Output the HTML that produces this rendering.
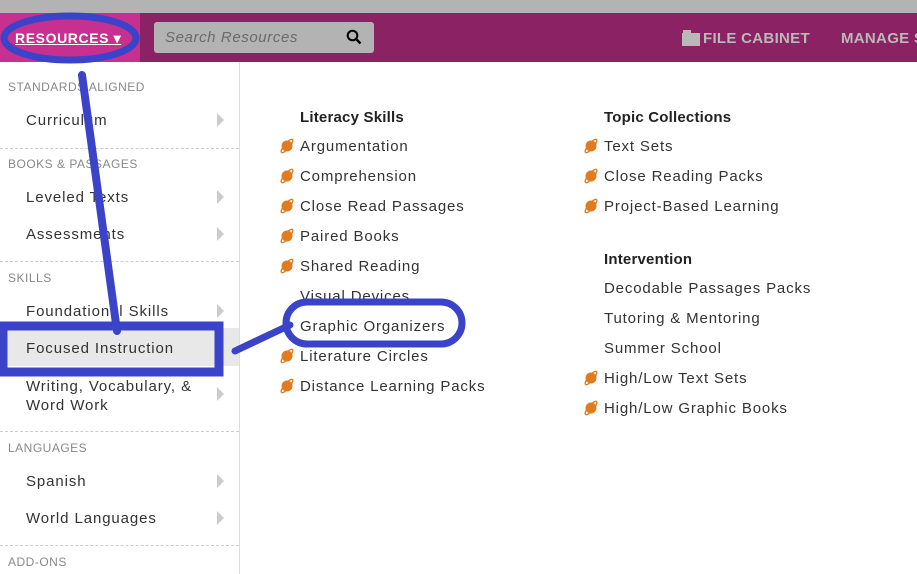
<!DOCTYPE html><html><head><style>
body{margin:0;width:917px;height:574px;overflow:hidden;font-family:"Liberation Sans",sans-serif;background:#fff;position:relative}
.top{position:absolute;left:0;top:0;width:917px;height:13px;background:#b3b3b3}
.hdr{position:absolute;left:0;top:13px;width:917px;height:49px;background:#8b2263}
.pink{position:absolute;left:0;top:0;width:140px;height:49px;background:#c7308e}
.res{position:absolute;left:15px;top:17px;color:#fff;font-weight:bold;font-size:14px;text-decoration:underline;letter-spacing:0.6px}
.search{position:absolute;left:154px;top:9px;width:220px;height:31px;background:#b3b3b3;border-radius:3px;color:#6a6a6a;font-style:italic;font-size:15px;line-height:31px;padding-left:11px;box-sizing:border-box;letter-spacing:0.6px}
.nav{position:absolute;top:17px;color:#b9b9b9;font-weight:bold;font-size:15px;white-space:nowrap;letter-spacing:0.3px}
.side{position:absolute;left:0;top:62px;width:239px;height:512px;border-right:1px solid #ddd}
.cat{position:absolute;left:8px;font-size:12px;color:#888;letter-spacing:0.5px;top:2px}
.it{position:absolute;left:26px;font-size:15px;color:#333;letter-spacing:0.9px;white-space:nowrap}
.arr{position:absolute;left:217px;width:0;height:0;border-left:7px solid #ccc;border-top:7px solid transparent;border-bottom:7px solid transparent}
.hr{position:absolute;left:0;width:239px;border-top:1px dashed #ccc}
.h{position:absolute;font-weight:bold;font-size:15px;color:#222;letter-spacing:0.2px}
.l{position:absolute;font-size:15px;color:#333;letter-spacing:0.85px;white-space:nowrap}
</style></head><body>
<div class="top"></div>
<div class="hdr"><div class="pink"></div><div class="res">RESOURCES ▾</div>
<div class="search">Search Resources<svg style="position:absolute;left:192px;top:7px" width="16" height="16" viewBox="0 0 16 16"><circle cx="6.5" cy="6.5" r="4.8" fill="none" stroke="#000" stroke-width="2"/><line x1="10" y1="10" x2="14.5" y2="14.5" stroke="#000" stroke-width="2.4"/></svg></div>
<svg style="position:absolute;left:682px;top:16px" width="18" height="17" viewBox="0 0 18 17"><rect x="0" y="4" width="18" height="13" fill="#b9b9b9"/><rect x="1" y="1" width="8" height="4" fill="#b9b9b9"/></svg>
<div class="nav" style="left:703px">FILE CABINET</div><div class="nav" style="left:841px">MANAGE S</div></div>
<div class="side">
<div class="cat" style="top:18px">STANDARDS ALIGNED</div>
<div class="it" style="top:50px">Curriculum</div><div class="arr" style="top:51px"></div>
<div class="hr" style="top:86px"></div>
<div class="cat" style="top:95px">BOOKS &amp; PASSAGES</div>
<div class="it" style="top:127px">Leveled Texts</div><div class="arr" style="top:128px"></div>
<div class="it" style="top:164px">Assessments</div><div class="arr" style="top:165px"></div>
<div class="hr" style="top:199px"></div>
<div class="cat" style="top:209px">SKILLS</div>
<div class="it" style="top:241px">Foundational Skills</div><div class="arr" style="top:242px"></div>
<div style="position:absolute;left:0;top:266px;width:239px;height:38px;background:#e8e8e8"></div>
<div class="it" style="top:278px">Focused Instruction</div>
<div class="it" style="top:315px;line-height:19px">Writing, Vocabulary, &amp;<br>Word Work</div><div class="arr" style="top:325px"></div>
<div class="hr" style="top:369px"></div>
<div class="cat" style="top:379px">LANGUAGES</div>
<div class="it" style="top:411px">Spanish</div><div class="arr" style="top:412px"></div>
<div class="it" style="top:448px">World Languages</div><div class="arr" style="top:449px"></div>
<div class="hr" style="top:483px"></div>
<div class="cat" style="top:493px">ADD-ONS</div>
</div>
<svg width="0" height="0" style="position:absolute"><defs><g id="pl"><circle cx="8" cy="8" r="5.5" fill="#e07b1f"/><ellipse cx="8" cy="8" rx="8.5" ry="2.6" transform="rotate(-50 8 8)" fill="none" stroke="#e07b1f" stroke-width="1.4"/></g></defs></svg>
<div class="h" style="left:300px;top:109px">Literacy Skills</div>
<div class="l" style="left:300px;top:138px">Argumentation</div>
<div class="l" style="left:300px;top:168px">Comprehension</div>
<div class="l" style="left:300px;top:198px">Close Read Passages</div>
<div class="l" style="left:300px;top:228px">Paired Books</div>
<div class="l" style="left:300px;top:258px">Shared Reading</div>
<div class="l" style="left:300px;top:288px">Visual Devices</div>
<div class="l" style="left:300px;top:318px">Graphic Organizers</div>
<div class="l" style="left:300px;top:348px">Literature Circles</div>
<div class="l" style="left:300px;top:378px">Distance Learning Packs</div>
<div class="h" style="left:604px;top:109px">Topic Collections</div>
<div class="l" style="left:604px;top:138px">Text Sets</div>
<div class="l" style="left:604px;top:168px">Close Reading Packs</div>
<div class="l" style="left:604px;top:198px">Project-Based Learning</div>
<div class="h" style="left:604px;top:251px">Intervention</div>
<div class="l" style="left:604px;top:280px">Decodable Passages Packs</div>
<div class="l" style="left:604px;top:310px">Tutoring &amp; Mentoring</div>
<div class="l" style="left:604px;top:340px">Summer School</div>
<div class="l" style="left:604px;top:370px">High/Low Text Sets</div>
<div class="l" style="left:604px;top:400px">High/Low Graphic Books</div>
<svg style="position:absolute;left:0;top:0" width="917" height="574">
<use href="#pl" x="279" y="138"/><use href="#pl" x="279" y="168"/><use href="#pl" x="279" y="198"/><use href="#pl" x="279" y="228"/><use href="#pl" x="279" y="258"/><use href="#pl" x="279" y="348"/><use href="#pl" x="279" y="378"/>
<use href="#pl" x="583" y="138"/><use href="#pl" x="583" y="168"/><use href="#pl" x="583" y="198"/><use href="#pl" x="583" y="370"/><use href="#pl" x="583" y="400"/>
<g fill="none" stroke="#3b44c8" stroke-linecap="round">
<ellipse cx="70" cy="38" rx="66" ry="22" stroke-width="7"/>
<line x1="82" y1="75" x2="117" y2="331" stroke-width="8"/>
<rect x="3" y="326" width="216" height="46" stroke-width="9" stroke-linecap="butt"/>
<line x1="235" y1="351" x2="290" y2="325" stroke-width="7"/>
<rect x="286" y="302" width="176" height="42" rx="21" stroke-width="7"/>
</g></svg>
</body></html>
